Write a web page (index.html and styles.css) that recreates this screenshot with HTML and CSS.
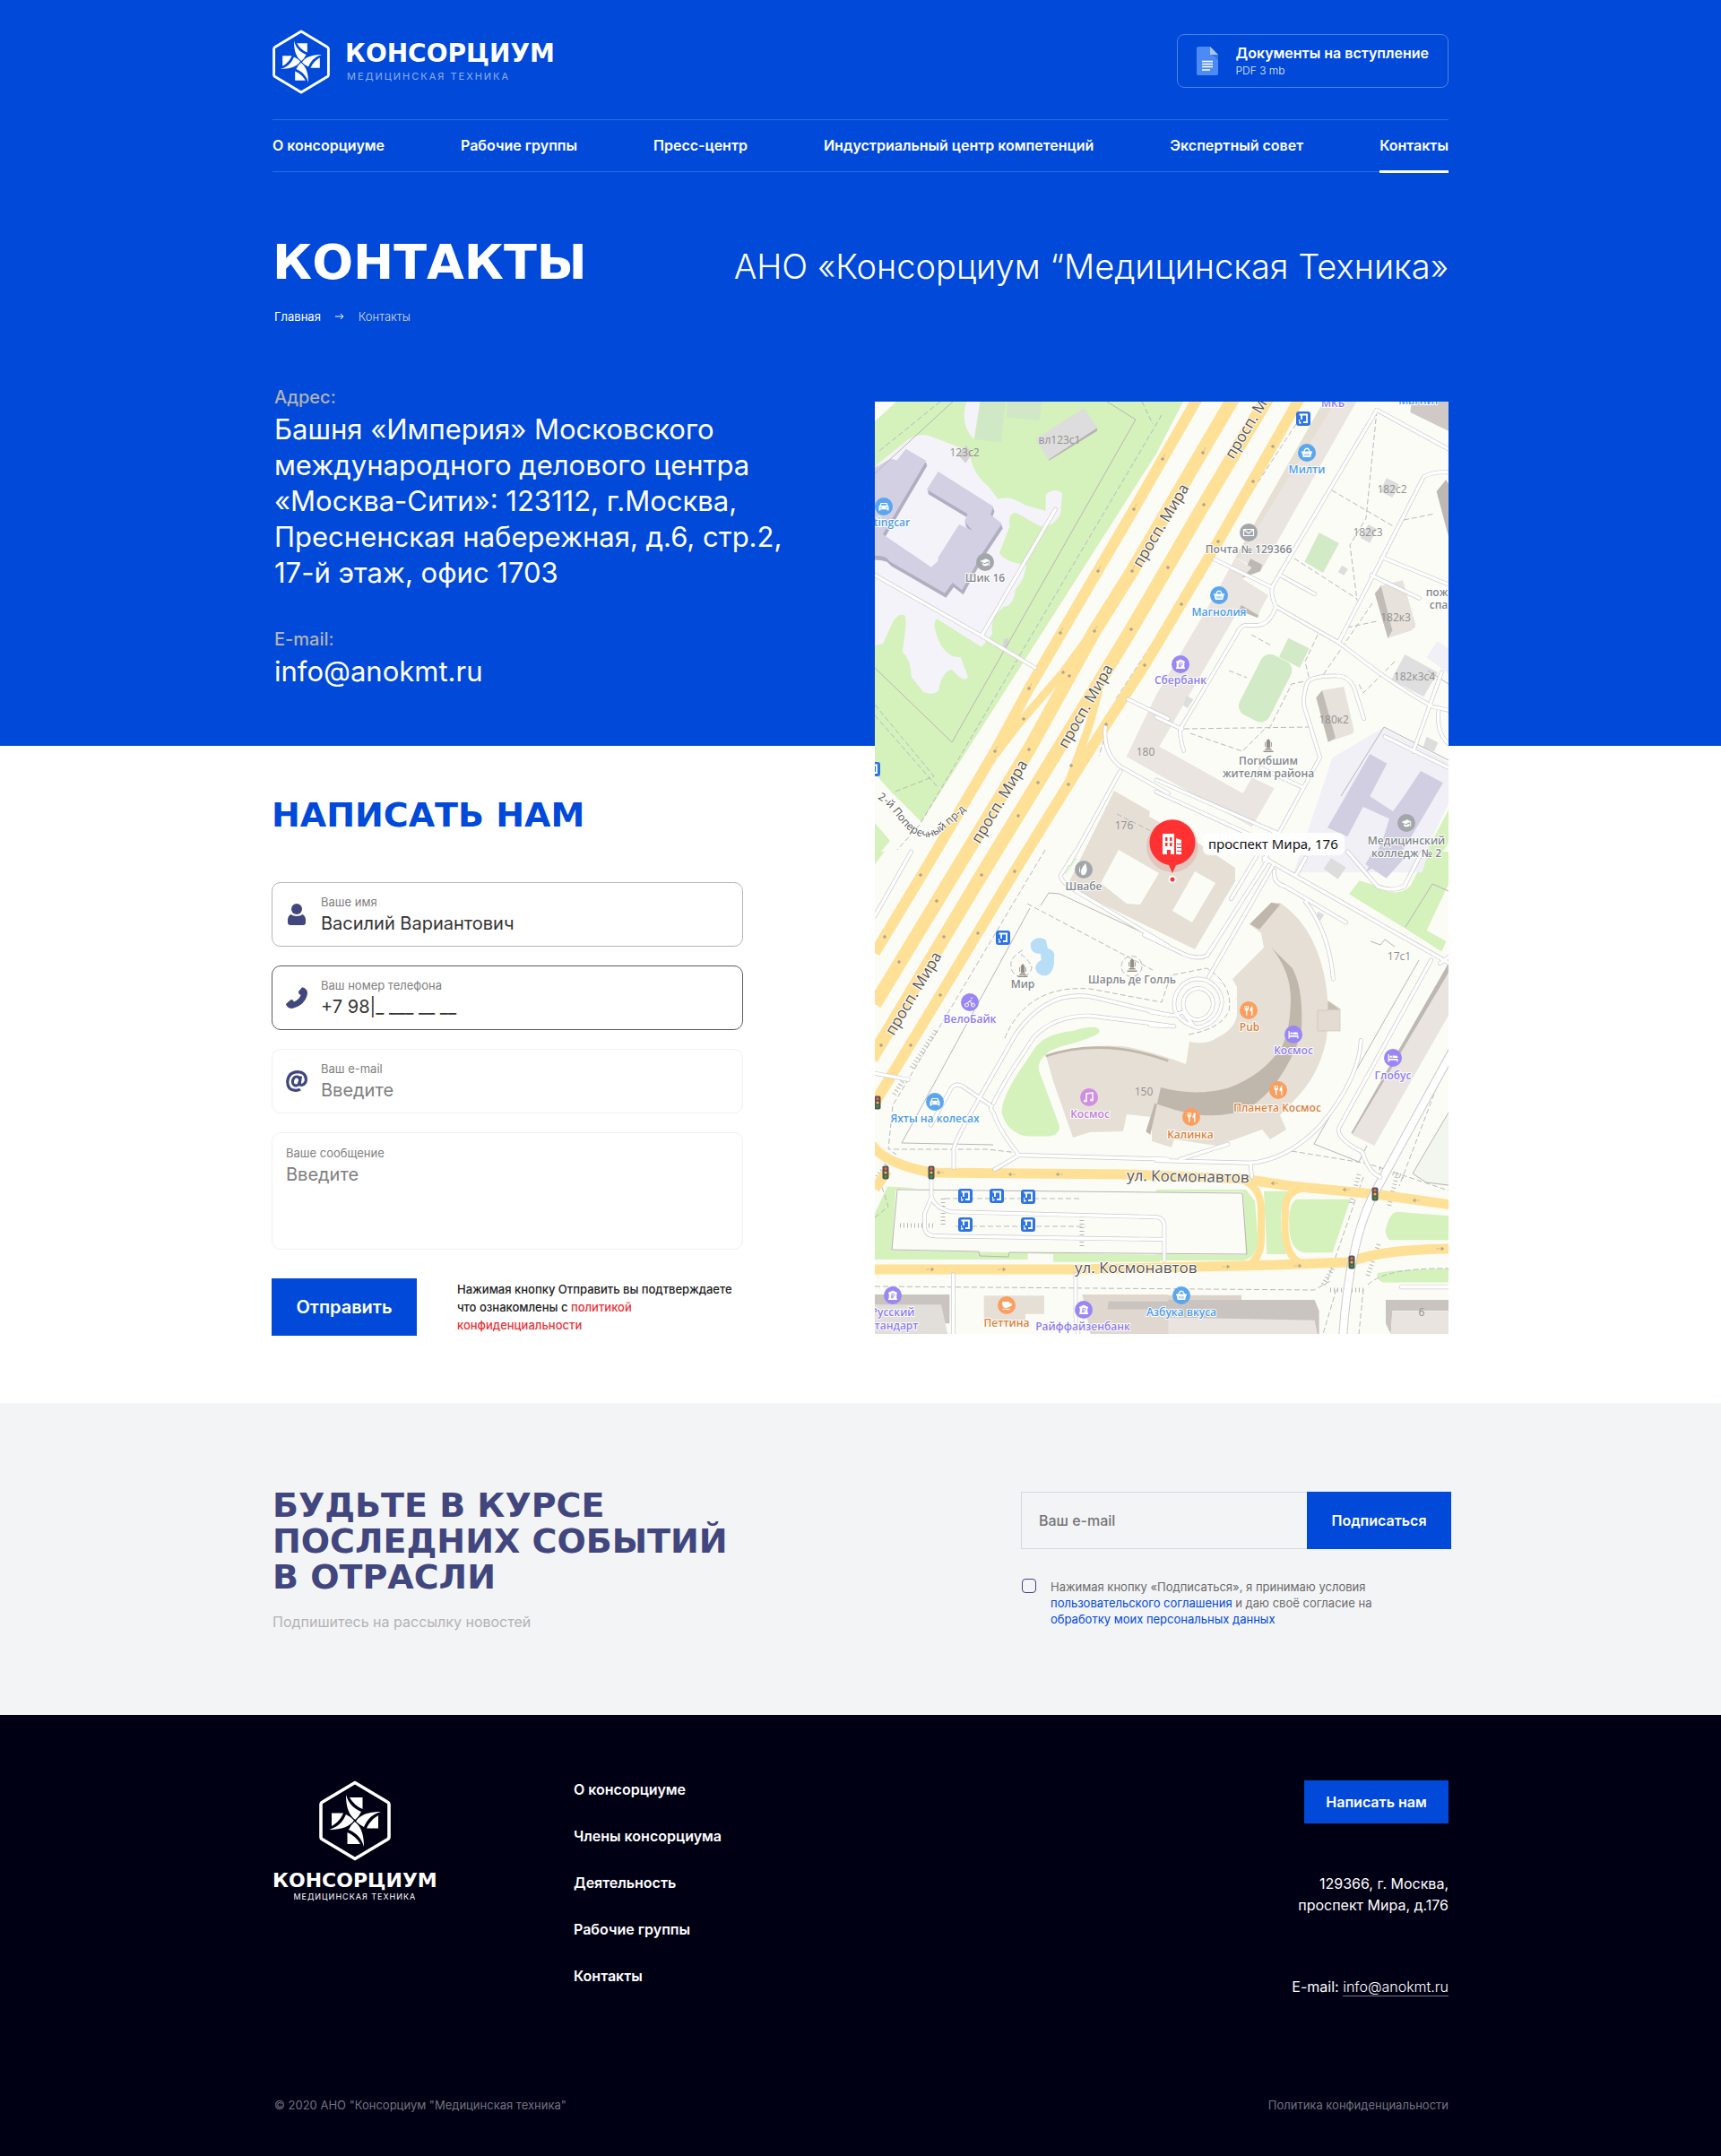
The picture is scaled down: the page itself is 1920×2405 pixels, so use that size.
FILE: index.html
```html
<!DOCTYPE html>
<html lang="ru">
<head>
<meta charset="utf-8">
<meta name="viewport" content="width=device-width, initial-scale=1">
<title>Контакты — Консорциум «Медицинская техника»</title>
<link rel="stylesheet" href="styles.css">
</head>
<body>
<svg class="sprite" aria-hidden="true">
  <defs>
    <g id="petal">
      <path d="M-10-29C-7-18 0-13 7-10Q4-4 .5-1.200Q-1-2-2-3C-8-9-10-18-10-29Z"/>
      <path d="M-6-26H8.500V-13Q-1-17-6-26Z"/>
    </g>
    <symbol id="logo" viewBox="0 0 80 90">
      <path d="M40 2.500 76 24Q78 25 78 27V63Q78 65 76 66L40 87.500 4 66Q2 65 2 63V27Q2 25 4 24Z" fill="none" stroke="currentColor" stroke-width="3.600" stroke-linejoin="round"/>
      <g fill="currentColor" transform="translate(40 45)">
        <use href="#petal"/><use href="#petal" transform="rotate(90)"/><use href="#petal" transform="rotate(180)"/><use href="#petal" transform="rotate(270)"/>
      </g>
    </symbol>
    <g id="bus"><rect x="-8" y="-8" width="16" height="16" rx="3" fill="#2f74e3"/><path d="M-4.500-4.500H5M-2-4V1M4 4V-4M0 4H5M-5 4.500H-2.500M-5 2H-4" fill="none" stroke="#fff" stroke-width="1.800"/></g>
    <g id="light"><rect x="-3.500" y="-7.500" width="7" height="15" rx="2" fill="#555"/><circle cy="-4.300" r="1.600" fill="#f25f5c"/><circle r="1.600" fill="#f4b93a"/><circle cy="4.300" r="1.600" fill="#2c9d3c"/></g>
    <g id="i-fork" fill="#fff"><path d="M-4.500-5V-1.500Q-4.500 0-3 .3V5.500H-1.600V.3Q0 0 0-1.500V-5H-1V-2H-1.800V-5H-2.800V-2H-3.600V-5ZM4.500-5Q1.500-4 1.500 1H3V5.500H4.500Z"/></g>
    <g id="i-basket"><path d="M-3.500-1-1.500-4.500H1.500L3.500-1" fill="none" stroke="#fff" stroke-width="1.300"/><path d="M-6-1.500H6V0H5.300L4.200 5H-4.200L-5.300 0H-6Z" fill="#fff"/><path d="M-2 1V3.500M0 1V3.500M2 1V3.500" stroke="#5aa6ef" stroke-width=".9"/></g>
    <g id="i-bank"><path d="M-5-3 0-5.500 5-3V-2H4.300V3.500H5V5H-5V3.500H-4.300V-2H-5Z" fill="#fff"/><path d="M-1 3.500V-1.700H1Q2.200-1.500 2.200-.4T1 .9H-2M-2 2.200H1" fill="none" stroke="#9a86f5" stroke-width=".9"/></g>
    <g id="i-bed" fill="#fff"><path d="M-5.500-4H-4.200V1H5.500V4.500H4.300V2.800H-4.200V4.500H-5.500ZM-.5-2.500H3.500Q5.500-2.300 5.500 0H-.5Z"/><circle cx="-2.300" cy="-1.200" r="1.300"/></g>
    <g id="i-car"><path d="M-5.500 0-4.600-1-3.500-4H3.500L4.600-1 5.500 0V4.500H3.700V3.300H-3.700V4.500H-5.500Z" fill="#fff"/><path d="M-3.300-1.200-2.600-2.900H2.600L3.300-1.200Z" fill="#5aa6ef"/><path d="M-4 1.200H-2.200M4 1.200H2.200" stroke="#5aa6ef"/></g>
    <g id="i-cap"><path d="M-5.500-1 1-3.800 5.500-1.500-1 1.300Z M-3 1.300-.5 2.300 3.500.7V3.500L-.5 4.500-3 3Z M4.300-1H5.200V4H4.300Z" fill="#fff"/></g>
    <g id="monument" fill="#958f89"><path d="M-2.200-5.500 0-8 2.200-5.500V2.500H-2.200ZM-3.800-4H-3V1H-3.800ZM3-4H3.800V1H3ZM-3.500 3H3.500V4.500H-3.500ZM-5.500 5.500H5.500V7H-5.500Z"/></g>
    <path id="lane" d="M3 443C22 452 28 476 48 484S78 476 112 446"/>
    <path id="school" d="M-60 290 70 215 92 220 122 182 190 222 45 468 207 578 235 552 228 548 300 435 345 455 318 425 328 400 192 318 230 258 415 375 405 402 443 432 378 530 310 655 278 630 252 665 70 560 55 545 35 540-60 535Z"/>
    <!-- side streets, one group per map sheet -->
    <g id="streets-nw" fill="none">
      <path d="M10 600 375 808 555 915M375 808 622 385"/>
      <path d="M865 1020 1000 1085M790 1110Q780 1200 840 1245L1000 1335M840 1260 670 1570"/>
    </g>
    <g id="streets-ne" fill="none">
      <path d="M738 52 390 640Q380 665 400 710 380 770 340 772H300Q280 775 270 800L80 1120Q78 1150 92 1192"/>
      <path d="M738 52 1000 195M195 552 385 645M415 605 530 668M400 710 610 830 750 935Q860 1010 925 1045L1000 1062"/>
      <path d="M610 830 755 550 895 275Q930 255 1000 262M755 545 1000 645M720 605 880 682"/>
      <path d="M695 1085 665 990Q650 945 610 942 520 940 505 965 485 1030 500 1060L548 1215 360 1560M955 930 860 1195M765 1145 1000 1260M945 1060Q935 1150 1000 1185M350 1250 490 1315M0 1080 85 1120"/>
      <path d="M0 1330 395 1510 M0 1290 410 1470" />
    </g>
    <g id="streets-sw" fill="none">
      <path d="M690 0 640 75Q640 100 700 130L1000 300M282 1005V945Q285 920 370 780L490 580Q600 430 760 465L1000 520"/>
      <path d="M205 870 275 750Q290 735 310 745L410 810Q400 815 415 830 430 880 500 965L1000 978M500 965Q440 1000 420 1010M415 800Q430 770 470 705L550 590Q620 520 740 522L1000 553"/>
      <path d="M207 1040V1095Q215 1130 270 1145L960 1162Q990 1165 987 1200V1300M207 1100 185 1150V1200Q190 1222 220 1222L985 1233M280 1345V1540M690 1345V1480L700 1540M18 705 130 725M140 0 18 205"/>
    </g>
    <g id="streets-se" fill="none">
      <path d="M360 20 1000 365M395 60Q390 100 430 110L635 225M500 160Q580 260 592 405M500 20 470 70M1000 320 950 355M345 0 250 150M390 45 175 400M375 25 170 330Q140 345 90 325L-40 265"/>
      <path d="M920 345 610 880Q605 915 690 955 710 1020 750 1035M685 600Q680 720 550 870 440 980 315 990L320 1035M0 982 315 990M80 978 240 930M820 1385H1000M640 0 740 110Q790 130 830 110L890 0"/>
      <path d="M190 480A50 50 0 1 0 140 535A55 55 0 0 0 190 480M220 480A80 80 0 1 0 60 490Q65 540 140 560 210 545 220 480M60 520 90 510 125 555M-20 552 60 555M-20 510 70 522"/>
    </g>
  </defs>
</svg>

<section class="hero">
  <div class="container">
    <header class="header">
      <a class="brand" href="#">
        <svg class="brand__mark" viewBox="0 0 80 90" preserveAspectRatio="none" aria-hidden="true"><use href="#logo"/></svg>
        <span class="brand__text"><span class="brand__name">КОНСОРЦИУМ</span><span class="brand__sub">МЕДИЦИНСКАЯ ТЕХНИКА</span></span>
      </a>
      <a class="doc" href="#">
        <svg class="doc__icon" viewBox="0 0 24 32" aria-hidden="true">
          <path d="M2 0H15L24 9V30Q24 32 22 32H2Q0 32 0 30V2Q0 0 2 0Z" fill="#4c8bf5"/>
          <path d="M16 8 24 15V9Z" fill="#3673dc"/><path d="M15 0 24 9H15Z" fill="#a6c5fa"/>
          <path d="M6 16.500H18M6 19.500H18M6 22.500H18M6 26H15" stroke="#fff" stroke-width="1.400"/>
        </svg>
        <span class="doc__text"><span class="doc__title">Документы на вступление</span><span class="doc__meta">PDF 3 mb</span></span>
      </a>
    </header>
    <nav class="nav">
      <a href="#">О консорциуме</a>
      <a href="#">Рабочие группы</a>
      <a href="#">Пресс-центр</a>
      <a href="#">Индустриальный центр компетенций</a>
      <a href="#">Экспертный совет</a>
      <a href="#" class="nav__active" aria-current="page">Контакты</a>
    </nav>
    <div class="headline">
      <h1>КОНТАКТЫ</h1>
      <p class="headline__org">АНО «Консорциум “Медицинская Техника»</p>
    </div>
    <div class="crumbs">
      <a href="#">Главная</a>
      <svg class="crumbs__arrow" viewBox="0 0 10 8" aria-hidden="true"><path d="M0 4H9M6 1 9 4 6 7" fill="none" stroke="currentColor"/></svg>
      <span class="crumbs__here">Контакты</span>
    </div>
    <div class="contact">
      <dl class="contact__info">
        <dt>Адрес:</dt>
        <dd>Башня «Империя» Московского<br>международного делового центра<br>«Москва-Сити»: 123112, г.Москва,<br>Пресненская набережная, д.6, стр.2,<br>17-й этаж, офис 1703</dd>
        <dt>E-mail:</dt>
        <dd><a href="mailto:info@anokmt.ru">info@anokmt.ru</a></dd>
      </dl>
      <svg class="map" viewBox="0 0 640 1040" preserveAspectRatio="xMidYMid slice" role="img" aria-label="Карта: проспект Мира, 176">
        <rect width="640" height="1040" fill="#fcfcf6"/>

        <!-- parks -->
        <g fill="#d5f1bc">
          <path d="M24 0H344L314 58 52 469 19 436 0 415V22Z"/>
          <path d="M0 470 17 490 0 510ZM0 502H10L0 516Z"/>
          <path d="M209 522 218 505 226 510 213 528Z" opacity=".6"/>
        </g>
        <g transform="translate(-6 502) scale(.3333 .3508)" fill="#d5f1bc">
          <path d="M770 572Q760 590 640 620 570 640 565 690L635 870Q640 900 600 905H530Q460 895 443 830 440 790 500 700L550 630Q580 580 680 570 770 545 770 572Z"/>
          <path d="M18 1297V1150L60 1065 160 1070 88 1075 75 1268 990 1282 970 1305H615V1280L530 1278V1297Z"/>
          <path d="M18 0H50L18 40Z"/>
        </g>
        <g transform="translate(314 502) scale(.3333 .3508)" fill="#d5f1bc">
          <path d="M645 135 680 92 740 110Q800 150 850 110L910 0H1000V60L905 250 970 285 955 318 835 245Z"/>
          <path d="M0 1082H290L300 1282 0 1280V1300H290Q340 1290 340 1230L330 1110 300 1075H0ZM360 1080H440Q470 1100 420 1130 410 1200 435 1280H370Z"/>
          <path d="M470 1105H650L590 1275H490Q445 1260 445 1190 440 1120 470 1105ZM805 1145 978 1158V1235H780Q765 1220 768 1200 780 1150 805 1145ZM740 1340 790 1333 978 1325V1370H760Q735 1362 740 1340Z"/>
        </g>
        <path d="M0 430 20 444 50 480 90 465 60 502H0Z" fill="#fcfcf6"/>
        <path d="M0 470 17 490 0 510Z" fill="#d5f1bc"/>

        <!-- grounds and buildings, north-west -->
        <g transform="translate(-6 -8) scale(.3333)">
          <path d="M18 240 130 150Q165 128 200 138L335 190Q340 260 400 310L430 350Q470 335 520 370L590 390V335Q620 310 645 330L640 400Q610 450 570 440L490 395Q460 400 470 440L435 530Q450 560 525 570 520 620 490 650 480 710 450 710 400 750 412 800L375 845 225 750Q205 770 240 840 270 885 305 878L330 945Q320 970 275 920 240 930 232 990 215 1010 180 995L140 945Q140 890 110 860 130 740 115 738 90 730 70 780L45 835 18 840Z" fill="#f4f3f9"/>
          <path d="M325 24H370L350 150Q300 100 325 24Z" fill="#f4f3f9"/>
          <path d="M372 24H455L440 160 352 150ZM462 24H577L568 88 458 76Z" fill="#d0e8c6"/>
          <path d="M600 222 762 122V112L600 212Z" fill="#b5b3b3"/><path d="M555 150 718 45 762 112 600 218Z" fill="#dedddd"/>
          <path d="M295 200 325 170 342 200 322 230Z" fill="#d5d3d3"/>
          <use href="#school" x="4" y="15" fill="#b2aec2"/><use href="#school" x="2" y="8" fill="#b2aec2"/>
          <use href="#school" fill="#d4d0e3"/>
          <path d="M450 820 465 815 465 840 447 850Z" fill="#d5d3d8"/>
        </g>
        <!-- buildings, north-east -->
        <g transform="translate(314 -8) scale(.3333)">
          <path d="M560 24 670 24 350 590 265 545Z" fill="#eae5e0"/>
          <path d="M560 24 265 545 275 550 600 24Z" fill="#e6dfd4"/>
          <path d="M315 550 355 570 348 592 285 615ZM285 695 345 720 340 748 270 720Z" fill="#bdb8b3"/>
          <path d="M265 545 320 580 285 615 375 672 340 738 285 705 10 1178 290 1335 320 1282 395 1318 320 1448-100 1212 0 1005 200 665Z" fill="#eae5e0"/>
          <path d="M820 24H978V85L830 28Z" fill="#e2deda"/><path d="M855 24H978V122L850 60Z" fill="#cfcac6"/>
          <path d="M938 325 970 285 978 300V475Z" fill="#bdb8b3"/>
          <path d="M545 462 612 498 558 597 496 560Z" fill="#d2eac6"/><path d="M442 815 512 850 480 915 411 878Z" fill="#d2eac6"/>
          <rect x="-56" y="-112" width="112" height="224" rx="34" transform="translate(365 983) rotate(27)" fill="#d2eac6"/>
          <path d="M732 665 755 640 775 815 865 780V770L830 790Z" fill="#c2bcb6"/><path d="M750 640 825 622 868 770 855 790 775 815 755 700Z" fill="#e8e2dc"/><path d="M732 668 752 640 790 790 775 815Z" fill="#c2bcb6"/>
          <path d="M555 990 628 978 662 1125 658 1135 575 1163Z" fill="#e8e2dc"/><path d="M535 1015 555 990 600 1150 575 1163Z" fill="#c2bcb6"/>
          <path d="M832 870 942 930 895 1012 787 955Z" fill="#e0dfe0"/><path d="M905 1145 943 1165 930 1195 893 1180ZM770 280 812 300 790 345 750 325ZM710 435 738 450 715 497 683 480ZM622 572 642 585 628 605 608 595ZM100 1008 124 1020 105 1050 90 1040Z" fill="#dedddd"/>
          <path d="M905 880 940 825 978 850V935ZM460 1600 590 1215 760 1115 978 1230V1370L930 1470 890 1600Z" fill="#f1f0f6"/>
          <path d="M715 1203 772 1235 715 1345 792 1395 825 1350 885 1260 960 1300 830 1520 700 1600 755 1500 780 1420 692 1380 640 1480 573 1450Z" fill="#d1cee2"/>
          <path d="M978 1390V1500L940 1560 900 1540Z" fill="#d5f1bc"/>
        </g>
        <!-- hotel quarter -->
        <path d="M267 434 307 457 306 463 357 490 402 520V535L357 611 214 541Z" fill="#e6dfd5"/>
        <path d="M272 500 317 526 296 561 281 560 252 537ZM357 524 380 537 354 581 332 568Z" fill="#fcfcf6"/>
        <path d="M418 583 442 559H452Q480 578 493 612 510 655 504 710 497 748 472 775L452 796 459 812 441 823 432 812Q405 822 381 830L334 823 331 832 309 825V798L281 795 277 814 240 815 221 821 199 758 191 730Q230 716 277 719 310 725 347 739L351 714Q370 718 381 710 402 700 404 684V653L399 644 434 609 431 593Z" fill="#e6dfd5"/>
        <g transform="translate(314 502) scale(.3333 .3508)">
          <path d="M313 230 385 162 415 168 345 247ZM385 305Q450 380 450 470 448 570 420 620 360 710 240 752 130 780 15 750L-20 900-35 890-5 800 60 820Q200 860 310 815 420 750 485 580 495 440 455 370Z" fill="#bfb7ac"/>
          <path d="M575 475 615 500V570H540V505H575Z" fill="#e4dcd2" stroke="#cbc2b8" stroke-width="2"/><path d="M575 475 615 503H575Z" fill="#c5beb5"/>
          <path d="M978 355V385L690 905 652 895Z" fill="#bdb8b3"/><path d="M978 385V520L730 935 655 900Z" fill="#e9e4df"/>
          <path d="M585 20 635 50 608 88 560 55ZM540 190 562 200 550 218 535 210Z" fill="#dedddd"/><path d="M700 40 725 0H850L770 85Z" fill="#d1cee2"/>
          <path d="M978 830 858 1025 905 1055 978 1065Z" fill="#f3f6ee"/>
          <path d="M768 1425H978V1460H790L785 1535 768 1500ZM0 1425H530L545 1460V1535H0Z" fill="#c9c4c0"/><path d="M790 1462H978V1535H785ZM0 1480 530 1490 540 1535H0Z" fill="#e9e4df"/><path d="M0 1410H285V1425H0Z" fill="#dcd4cb"/>
        </g>
        <g transform="translate(-6 502) scale(.3333 .3508)">
          <path d="M590 650Q780 590 1000 665" fill="none" stroke="#bfb7ac" stroke-width="8"/>
          <path d="M18 1408H268V1500H18Z" fill="#c9c4c0"/><path d="M18 1440H240L262 1535H18Z" fill="#e2ded9"/>
          <path d="M383 1412H585V1470H522V1500H383Z" fill="#e6dfd5"/><path d="M712 1408H1000V1535H740Z" fill="#e0d8cf"/><path d="M800 1430H1000V1455H797Z" fill="#c9c4c0"/>
          <path d="M540 290Q560 265 590 280L597 308Q625 315 618 340 620 385 590 395 560 395 555 370 560 350 575 345L573 325Q535 325 540 290Z" fill="#b8def6"/>
        </g>

        <!-- fences and property lines -->
        <g fill="none" stroke="#b9b5b8" stroke-width="1">
          <path d="M87 0 0 80M259 0 291 20 86 380 0 297M173 565 30 827 132 829"/>
          <path d="M185 562 194 548 206 549 324 604M25 879 19 946 116 948 117 953 149 954 150 949 415 951 410 883 25 879M607 623 490 828 540 848 549 830"/>
          <path d="M640 793 600 861 615 871 640 874M553 602 564 606 569 600 580 608M520 440 568 363 640 400M592 586 622 538 640 546M617 300 640 315"/>
        </g>
        <g fill="none" stroke="#b7babd" stroke-width="1" stroke-dasharray="6 3">
          <path d="M320 15 50 472 25 500M73 0 5 55M0 338 66 418 20 436M0 350 70 430M298 0 310 25M470 25 270 330 250 395M560 10 548 130 530 160 538 222M510 99 580 140M468 175 538 220M494 260 480 290 485 310M555 225 500 305M420 260 442 272M395 300 415 308M440 365 465 315 480 312M345 365 484 363M352 370 410 390 435 365"/>
          <path d="M190 500 20 785 15 834H125L160 838M170 560 310 634M165 612Q150 620 152 630A10 10 0 0 0 175 630Q170 620 160 615M275 630A11 11 0 0 1 298 630A11 11 0 0 1 275 630M145 710Q170 650 240 655L320 670 330 640 370 632Q400 650 395 680 385 700 350 706M78 889H230M90 920H235M0 987 490 991 510 980M465 836 550 850 640 880M545 865 505 980M640 730 585 875M515 990 500 1040M545 990 540 1040M550 985Q570 966 640 967M270 460 330 490"/>
          <path d="M0 910 15 898 6 870M580 290 545 325 540 315M590 132 625 125M527 252 560 245"/>
        </g>
        <g fill="none" stroke="#b4b7ba" stroke-width="5" stroke-dasharray="1 3">
          <path d="M68 702 40 745M33 755 20 775M22 838 2 866M28 919H65M76 889V918M231 909V945M540 862 531 895M582 865 573 900M515 960 500 985M562 940 550 975M508 991H545M563 855 590 865"/>
        </g>

        <!-- avenues -->
        <g fill="none" stroke="#fee097" stroke-linejoin="round">
          <path stroke-width="12" d="M360 -4 321 64 289 120 172 320 134 390 62 512 0 615M474-4 383 156 301 294 258 360 216 427 156 524 73 662 0 782"/>
          <path stroke-width="9" d="M242 258 210 302 160 360 134 394M250 322 238 365 214 430"/>
          <path stroke-width="15" d="M400-4 287 189 245 256 172 388 97 512 0 672M438-4 367 115 286 254 182 425 119 528 7 715-4 733"/>
          <path stroke-width="11" d="M-4 828Q10 850 63 860L280 862 411 867 464 875 558 884 644 896M0 878 14 858M-4 968H225L447 963 527 960Q570 945 644 945"/>
          <path stroke-width="8" d="M408 868Q430 874 431 900V935Q431 955 415 964M480 877Q456 880 458 905 454 955 478 962"/>
        </g>
        <path d="M644 725 560 878Q530 930 522 1044" fill="none" stroke="#c9cacd" stroke-width="10"/>
        <path d="M644 725 560 878Q530 930 522 1044" fill="none" stroke="#fff" stroke-width="8"/>
        <g class="map__case">
          <use href="#streets-nw" transform="translate(-6 -8) scale(.3333)"/><use href="#streets-ne" transform="translate(314 -8) scale(.3333)"/><use href="#streets-sw" transform="translate(-6 502) scale(.3333 .3508)"/><use href="#streets-se" transform="translate(314 502) scale(.3333 .3508)"/>
        </g>
        <g class="map__core">
          <use href="#streets-nw" transform="translate(-6 -8) scale(.3333)"/><use href="#streets-ne" transform="translate(314 -8) scale(.3333)"/><use href="#streets-sw" transform="translate(-6 502) scale(.3333 .3508)"/><use href="#streets-se" transform="translate(314 502) scale(.3333 .3508)"/>
        </g>
        <g fill="#b3a88f" stroke="#b3a88f" stroke-width=".5">
          <path d="M319 64l2-2 2 2-2 2ZM322 62l2-4M287 120l2-2 2 2-2 2ZM290 118l2-4M247 189l2-2 2 2-2 2ZM250 187l2-4M205 258l2-2 2 2-2 2ZM208 256l2-4M170 320l2-2 2 2-2 2ZM173 318l2-4M132 390l2-2 2 2-2 2ZM135 388l2-4"/>
          <path d="M364 57l2-2 2 2-2 2ZM367 55l2-4M285 189l2-2 2 2-2 2ZM288 187l2-4M243 256l2-2 2 2-2 2ZM246 254l2-4M215 306l2-2 2 2-2 2ZM208 302l2-2 2 2-2 2ZM170 388l2-2 2 2-2 2ZM164 354l2-2 2 2-2 2Z"/>
          <path d="M365 115l2-2 2 2-2 2ZM325 185l2-2 2 2-2 2ZM284 254l2-2 2 2-2 2ZM180 425l2-2 2 2-2 2ZM158 462l2-2 2 2-2 2ZM442 50l2-2 2 2-2 2ZM420 89l2-2 2 2-2 2ZM381 156l2-2 2 2-2 2ZM340 226l2-2 2 2-2 2ZM299 294l2-2 2 2-2 2ZM256 360l2-2 2 2-2 2ZM217 406l2-2 2 2-2 2ZM214 427l2-2 2 2-2 2Z"/>
          <path d="M49 528l2-2 2 2-2 2ZM9 597l2-2 2 2-2 2ZM67 557l2-2 2 2-2 2ZM25 625l2-2 2 2-2 2ZM117 528l2-2 2 2-2 2ZM75 597l2-2 2 2-2 2ZM154 524l2-2 2 2-2 2ZM113 593l2-2 2 2-2 2ZM71 662l2-2 2 2-2 2ZM38 718l2-2 2 2-2 2ZM5 718l2-2 2 2-2 2Z"/>
          <path d="M69 860l3-2V862ZM72 860h5M149 862l3-2V864ZM152 862h5M202 862l3-2V864ZM205 862h5M442 872l3-2V874ZM445 872h5M522 879l3-2V881ZM525 879h5M600 891l3-2V893ZM603 891h5M66 968l-3-2V970ZM63 968h-6M146 968l-3-2V970ZM143 968h-6M396 965l-3-2V967ZM393 965h-6M476 964l-3-2V966ZM473 964h-6M635 945l-3-2V947ZM632 945h-6"/>
        </g>

        <!-- street names -->
        <g class="map__street">
          <text transform="translate(400 65) rotate(-59)">просп. М</text>
          <text transform="translate(297 186) rotate(-59)">просп. Мира</text>
          <text transform="translate(214 388) rotate(-60)">просп. Мира</text>
          <text transform="translate(117 494) rotate(-59)">просп. Мира</text>
          <text transform="translate(21 708) rotate(-59)">просп. Мира</text>
          <text transform="translate(281 869) rotate(1)">ул. Космонавтов</text>
          <text x="223" y="972">ул. Космонавтов</text>
        </g>
        <text class="map__lane"><textPath href="#lane">2-й Поперечный пр-д</textPath></text>

        <!-- house numbers -->
        <g class="map__num">
          <text x="100" y="61">123с2</text><text x="206" y="47">вл123с1</text><text x="577" y="102">182с2</text><text x="550" y="150">182с3</text>
          <text x="581" y="245">182к3</text><text x="602" y="311">182к3с4</text><text x="512" y="359">180к2</text><text x="302" y="395">180</text><text x="278" y="477">176</text>
          <text x="300" y="774">150</text><text x="585" y="623">17с1</text><text x="610" y="1020">6</text>
        </g>

        <!-- places -->
        <g class="map__poi map__poi--blue">
          <circle cx="10" cy="117" r="10"/><use href="#i-car" x="10" y="117"/><text x="19" y="139">tingcar</text>
          <circle cx="482" cy="57" r="10"/><use href="#i-basket" x="482" y="57"/><text x="482" y="80">Милти</text>
          <circle cx="384" cy="216" r="10"/><use href="#i-basket" x="384" y="216"/><text x="384" y="239">Магнолия</text>
          <circle cx="67" cy="781" r="10"/><use href="#i-car" x="67" y="781"/><text x="67" y="804">Яхты на колесах</text>
          <circle cx="342" cy="997" r="10"/><use href="#i-basket" x="342" y="997"/><text x="342" y="1020">Азбука вкуса</text>
          <text x="607" y="3">Магнит</text>
        </g>
        <g class="map__poi map__poi--violet">
          <circle cx="341" cy="293" r="10"/><use href="#i-bank" x="341" y="293"/><text x="341" y="315">Сбербанк</text>
          <circle cx="106" cy="670" r="10"/><g transform="translate(106 670)" fill="none" stroke="#fff"><circle cx="-3.500" cy="3" r="2"/><circle cx="3.500" cy="3" r="2"/><path d="M-3 2-1-1 2 1 3 3M-1-1 2-2"/><circle cx="2" cy="-4.500" r=".6"/></g><text x="106" y="693">ВелоБайк</text>
          <circle cx="467" cy="706" r="10"/><use href="#i-bed" x="467" y="706"/><text x="467" y="728">Космос</text>
          <circle cx="578" cy="732" r="10"/><use href="#i-bed" x="578" y="732"/><text x="578" y="756">Глобус</text>
          <circle cx="20" cy="997" r="10"/><use href="#i-bank" x="20" y="997"/><text x="20" y="1020">Русский</text><text x="24" y="1035">тандарт</text>
          <circle cx="233" cy="1013" r="10"/><use href="#i-bank" x="233" y="1013"/><text x="232" y="1036">Райффайзенбанк</text>
          <text x="511" y="6">МКБ</text>
        </g>
        <g class="map__poi map__poi--orange">
          <circle cx="417" cy="679" r="10"/><use href="#i-fork" x="417" y="679"/><text x="418" y="702">Pub</text>
          <circle cx="450" cy="768" r="10"/><use href="#i-fork" x="450" y="768"/><text x="449" y="792">Планета Космос</text>
          <circle cx="353" cy="798" r="10"/><use href="#i-fork" x="353" y="798"/><text x="352" y="822">Калинка</text>
          <circle cx="147" cy="1008" r="10"/><path d="M142 1004H150V1006Q153 1005 153 1007T149 1010Q147 1012 144 1010.500 142 1009 142 1004ZM142 1012H151V1013H142Z" fill="#fff"/><text x="147" y="1032">Петтина</text>
        </g>
        <g class="map__poi map__poi--pink">
          <circle cx="239" cy="776" r="10"/><path d="M236 780V772L243 771V779" fill="none" stroke="#fff" stroke-width="1.500"/><ellipse cx="235" cy="780" rx="2" ry="1.600" fill="#fff"/><ellipse cx="242" cy="779" rx="2" ry="1.600" fill="#fff"/><text x="240" y="799">Космос</text>
        </g>
        <g class="map__poi map__poi--grey">
          <circle cx="123" cy="179" r="10"/><use href="#i-cap" x="123" y="179"/><text x="123" y="201">Шик 16</text>
          <circle cx="417" cy="146" r="10"/><path d="M411.500 142.500H422.500V149.500H411.500ZM411.500 142.500 417 147 422.500 142.500" fill="none" stroke="#fff" stroke-width="1.200"/><text x="417" y="169">Почта № 129366</text>
          <circle cx="593" cy="470" r="10"/><use href="#i-cap" x="593" y="470"/><text x="593" y="494">Медицинский</text><text x="593" y="508">колледж № 2</text>
          <circle cx="233" cy="522" r="10"/><path d="M235 515Q238 522 235 527 231 530 230 526T235 515ZM229 518Q227 523 229 526" fill="#fff"/><text x="233" y="545">Швабе</text>
          <use href="#monument" x="439" y="384"/><text x="439" y="405">Погибшим</text><text x="439" y="419">жителям района</text>
          <use href="#monument" x="165" y="635"/><text x="165" y="654">Мир</text>
          <use href="#monument" x="287" y="629"/><text x="287" y="649">Шарль де Голль</text>
          <text x="627" y="217">пож</text><text x="629" y="231">спа</text>
        </g>
        <use href="#bus" x="478" y="19"/><use href="#bus" x="-2" y="410"/><use href="#bus" x="143" y="598"/><use href="#bus" x="101" y="886"/><use href="#bus" x="136" y="886"/><use href="#bus" x="171" y="887"/><use href="#bus" x="101" y="918"/><use href="#bus" x="171" y="918"/>
        <use href="#light" x="3" y="782"/><use href="#light" x="12" y="860"/><use href="#light" x="63" y="860"/><use href="#light" x="558" y="884"/><use href="#light" x="532" y="960"/>

        <!-- office pin -->
        <circle cx="332" cy="496" r="29" fill="#c33" opacity=".14"/>
        <path d="M332 526 328 517A25.500 25.500 0 1 1 336 517Z" fill="#fe3232"/>
        <path d="M321 482H334V505H330V500H326V505H321ZM336 487 342 489V505H336Z" fill="#fff"/>
        <path d="M324 486H326.500V490H324ZM329 486H331.500V490H329ZM324 492H326.500V496H324ZM329 492H331.500V496H329ZM337 493H343V494H337ZM337 497H343V498H337ZM337 501H343V502H337Z" fill="#fe3232"/>
        <circle cx="332" cy="533" r="4.500" fill="#fff"/><circle cx="332" cy="533" r="2.500" fill="#fe3232"/>
        <rect x="366" y="481" width="158" height="25" rx="7" fill="#fff" opacity=".92"/>
        <text class="map__office" x="372" y="499">проспект Мира, 176</text>
      </svg>
    </div>
  </div>
</section>

<section class="write">
  <div class="container">
    <form class="form">
      <h2>НАПИСАТЬ НАМ</h2>
      <div class="form__fields">
        <div class="field field--filled">
          <svg class="field__icon" viewBox="0 0 24 24" aria-hidden="true"><ellipse cx="12" cy="6" rx="6" ry="6"/><path d="M5.500 12Q8 14 12 14T18.500 12Q22 13.500 22 19V21Q22 24 19 24H5Q2 24 2 21V19Q2 13.500 5.500 12Z"/></svg>
          <div class="field__body"><label for="name">Ваше имя</label><input id="name" type="text" value="Василий Вариантович"></div>
        </div>
        <div class="field field--focus">
          <svg class="field__icon" viewBox="0 0 24 24" aria-hidden="true"><path d="M19 .5Q24 2 24 7 22 20 7 24 2 24 0 19.500Q0 18.500 1 18L5 14.500Q6.500 13.500 8 15L9 16.500Q15 14 16.500 9L15 8Q13.500 6.500 14 5L17.500 1Q18 0 19 .5Z"/></svg>
          <div class="field__body"><label for="phone">Ваш номер телефона</label><input id="phone" type="text" value="+7 98|_ ___ __ __"></div>
        </div>
        <div class="field">
          <svg class="field__icon" viewBox="0 0 24 24" aria-hidden="true"><g fill="none" stroke="currentColor" stroke-width="3.200"><ellipse cx="11.500" cy="12" rx="4" ry="5" transform="rotate(15 11.500 12)"/><path d="M16.500 6.500 15.200 14Q15 16.500 17.500 16.500 22.400 15.500 22.400 10 22 2 13 1.700 2.500 2 1.700 13 2 22.500 11 22.400 14 22.300 16 21"/></g></svg>
          <div class="field__body"><label for="email">Ваш e-mail</label><input id="email" type="email" placeholder="Введите"></div>
        </div>
        <div class="field field--area">
          <div class="field__body"><label for="message">Ваше сообщение</label><textarea id="message" placeholder="Введите"></textarea></div>
        </div>
      </div>
      <div class="form__foot">
        <button class="btn btn--send" type="button">Отправить</button>
        <p class="form__note">Нажимая кнопку Отправить вы подтверждаете<br>что ознакомлены с <a href="#">политикой<br>конфиденциальности</a></p>
      </div>
    </form>
  </div>
</section>

<section class="news">
  <div class="container news__row">
    <div>
      <h2>БУДЬТЕ В КУРСЕ<br>ПОСЛЕДНИХ СОБЫТИЙ<br>В ОТРАСЛИ</h2>
      <p class="news__lead">Подпишитесь на рассылку новостей</p>
    </div>
    <form class="subscribe">
      <div class="subscribe__row">
        <input type="email" placeholder="Ваш e-mail" aria-label="Ваш e-mail">
        <button class="btn" type="button">Подписаться</button>
      </div>
      <div class="consent">
        <input type="checkbox" id="agree">
        <label for="agree">Нажимая кнопку «Подписаться», я принимаю условия<br><a href="#">пользовательского соглашения</a> и даю своё согласие на<br><a href="#">обработку моих персональных данных</a></label>
      </div>
    </form>
  </div>
</section>

<footer class="footer">
  <div class="container">
    <div class="footer__main">
      <a class="footer__brand" href="#">
        <svg class="footer__mark" viewBox="0 0 80 90" aria-hidden="true"><use href="#logo"/></svg>
        <span class="footer__name">КОНСОРЦИУМ</span>
        <span class="footer__sub">МЕДИЦИНСКАЯ ТЕХНИКА</span>
      </a>
      <nav class="footer__nav">
        <a href="#">О консорциуме</a><a href="#">Члены консорциума</a><a href="#">Деятельность</a><a href="#">Рабочие группы</a><a href="#">Контакты</a>
      </nav>
      <div class="footer__contact">
        <button class="btn btn--small" type="button">Написать нам</button>
        <address>129366, г. Москва,<br>проспект Мира, д.176</address>
        <p>E-mail: <a href="mailto:info@anokmt.ru">info@anokmt.ru</a></p>
      </div>
    </div>
    <div class="footer__legal">
      <span>© 2020 АНО "Консорциум "Медицинская техника"</span>
      <a href="#">Политика конфиденциальности</a>
    </div>
  </div>
</footer>
</body>
</html>
```
FILE: styles.css
```css
:root {
  --blue: #0049d9;
  --navy: #41467f;
  --display: "DejaVu Sans", Inter, sans-serif;
}

* { box-sizing: border-box; }

body {
  margin: 0;
  background: #fff;
  color: #222;
  font-family: Inter, "Liberation Sans", sans-serif;
  font-size: 16px;
  line-height: 24px;
}

h1, h2, p, dl, dd { margin: 0; }
a { color: inherit; text-decoration: none; }
input, textarea, button { font: inherit; }

.sprite { display: none; }

.container {
  max-width: 1312px;
  margin: 0 auto;
}

h1, h2, .brand__name, .footer__name {
  font-family: var(--display);
  font-weight: 700;
}

h2 {
  font-size: 38px;
  line-height: 40px;
}

.btn {
  border: 0;
  background: var(--blue);
  color: #fff;
  font-weight: 600;
  cursor: pointer;
}

/* hero */
.hero {
  background: var(--blue);
  color: #fff;
}

.header {
  display: flex;
  justify-content: space-between;
  align-items: flex-start;
  padding: 33px 0 28px;
}

.brand {
  display: flex;
  gap: 17px;
}

.brand__mark { width: 64px; height: 72px; }

.brand__text {
  display: flex;
  flex-direction: column;
  padding-top: 11px;
}

.brand__name {
  font-size: 28px;
  line-height: 32px;
}

.brand__sub {
  padding: 1px 0 0 2px;
  font-size: 11px;
  line-height: 16px;
  letter-spacing: 2px;
  opacity: .55;
}

.doc {
  display: flex;
  align-items: center;
  gap: 20px;
  margin-top: 5px;
  padding: 9px 21px;
  border: 1px solid #4d80e4;
  border-radius: 8px;
}

.doc__icon { width: 24px; height: 32px; }
.doc__text { display: flex; flex-direction: column; }
.doc__title { font-weight: 600; line-height: 22px; }
.doc__meta { font-size: 12px; line-height: 18px; font-weight: 300; opacity: .9; }

.nav {
  display: flex;
  justify-content: space-between;
  border-top: 1px solid #2e6be2;
  border-bottom: 1px solid #2e6be2;
  font-weight: 600;
}

.nav a { padding: 16px 0 17px; }

.nav__active { position: relative; }

.nav__active::after {
  content: "";
  position: absolute;
  inset: auto 0 -2px;
  height: 3px;
  background: #fff;
}

.headline {
  display: flex;
  justify-content: space-between;
  align-items: baseline;
  padding-top: 71px;
}

h1 {
  font-size: 54px;
  line-height: 60px;
}

.headline__org {
  font-size: 38px;
  line-height: 48px;
  font-weight: 300;
}

.crumbs {
  display: flex;
  align-items: center;
  gap: 16px;
  padding: 22px 0 0 2px;
  font-size: 13px;
  line-height: 16px;
}

.crumbs__arrow { width: 10px; height: 8px; }
.crumbs__here { color: #d9dbe3; font-weight: 300; }

.contact {
  display: flex;
  justify-content: space-between;
  padding-top: 70px;
}

.contact__info { padding: 0 0 63px 2px; }

.contact dt {
  color: #b3b3b3;
  font-size: 20px;
  line-height: 24px;
  font-weight: 500;
}

.contact dd {
  padding-top: 4px;
  font-size: 31px;
  line-height: 40px;
}

.contact dd + dt { margin-top: 42px; }

/* map hangs over the white section below */
.map {
  position: relative;
  z-index: 1;
  width: 640px;
  height: 1040px;
  margin: 17px 0 -656px;
}

.map__case { stroke: #c9cacd; stroke-width: 14px; stroke-linecap: round; stroke-linejoin: round; }
.map__core { stroke: #fff; stroke-width: 10px; stroke-linecap: round; stroke-linejoin: round; }

.map text {
  font-family: "Open Sans", "Noto Sans", sans-serif;
  paint-order: stroke;
  stroke: #fff;
  stroke-width: 2px;
  stroke-linejoin: round;
}

.map__street { font-size: 17px; fill: #555; }
.map .map__lane { font-size: 12px; fill: #555; }
.map__num { font-size: 12px; fill: #909090; text-anchor: middle; }
.map__num text { stroke: none; }
.map__poi { font-size: 12px; font-weight: 600; text-anchor: middle; }
.map__poi--blue circle { fill: #5aa6ef; }
.map__poi--blue text { fill: #4c9bea; }
.map__poi--violet > circle { fill: #9a86f5; }
.map__poi--violet text { fill: #8f7cf0; }
.map__poi--orange circle { fill: #fb9f5f; }
.map__poi--orange text { fill: #dc7f38; }
.map__poi--pink circle { fill: #cf8fe4; }
.map__poi--pink text { fill: #c07bd8; }
.map__poi--grey circle { fill: #a3a7ab; }
.map__poi--grey text { fill: #84888d; }
.map .map__office { font-family: "Noto Sans", sans-serif; font-size: 15px; fill: #111; stroke: none; }

/* message form */
.write { padding: 57px 0 75px; }
.write h2 { color: var(--blue); }
.form { width: 526px; margin-left: -1px; }

.form__fields {
  display: flex;
  flex-direction: column;
  gap: 21px;
  padding-top: 55px;
}

.field {
  display: flex;
  align-items: center;
  gap: 15px;
  padding: 13px 15px;
  border: 1px solid #f0f0f0;
  border-radius: 10px;
}

.field--filled { border-color: #b5b5b5; }
.field--focus { border-color: #5c5c5c; }
.field--area { padding: 14px 15px 12px; }

.field__icon {
  flex: none;
  width: 24px;
  height: 24px;
  color: var(--navy);
  fill: currentColor;
}

.field__body {
  flex: 1;
  display: flex;
  flex-direction: column;
  gap: 4px;
}

.field label {
  color: #808080;
  font-size: 13px;
  line-height: 16px;
}

.field input,
.field textarea {
  width: 100%;
  height: 24px;
  padding: 0;
  border: 0;
  outline: 0;
  background: none;
  color: #333;
  font-size: 20px;
  line-height: 24px;
}

.field textarea { height: 83px; resize: none; }
.field ::placeholder { color: #808080; opacity: 1; }

.form__foot {
  display: flex;
  align-items: center;
  gap: 45px;
  padding-top: 32px;
}

.btn--send {
  width: 162px;
  height: 64px;
  font-size: 20px;
}

.form__note {
  font-size: 13px;
  line-height: 20px;
  font-weight: 500;
}

.form__note a { color: #e73338; }

/* newsletter */
.news {
  padding: 94px 0 92px;
  background: #f3f4f6;
}

.news h2 { color: var(--navy); }

.news__row {
  display: flex;
  justify-content: space-between;
  align-items: flex-start;
}

.news__lead {
  padding-top: 18px;
  color: #b3b3b3;
}

.subscribe {
  width: 480px;
  margin: 5px -3px 0 0;
}

.subscribe__row { display: flex; }

.subscribe__row input {
  flex: 1;
  min-width: 0;
  height: 64px;
  padding: 0 19px;
  border: 1px solid #d4d7df;
  border-right: 0;
  border-radius: 0;
  background: none;
  font-weight: 500;
}

.subscribe__row ::placeholder { color: #757575; opacity: 1; }
.subscribe__row .btn { width: 161px; }

.consent {
  display: flex;
  align-items: flex-start;
  gap: 16px;
  padding: 33px 0 0 1px;
  color: #6b6b6b;
  font-size: 13px;
  line-height: 18px;
}

.consent input {
  appearance: none;
  flex: none;
  width: 16px;
  height: 16px;
  margin: 0;
  border: 1px solid var(--navy);
  border-radius: 4px;
}

.consent a { color: var(--blue); }

/* footer */
.footer {
  padding: 71px 0 49px;
  background: #000014;
  color: #fff;
}

.footer__main {
  display: grid;
  grid-template-columns: 336px 1fr auto;
}

.footer__brand {
  display: flex;
  flex-direction: column;
  align-items: center;
  justify-self: start;
  padding-top: 2px;
}

.footer__mark { width: 80px; height: 90px; }

.footer__name {
  padding-top: 10px;
  font-size: 22px;
  line-height: 24px;
}

.footer__sub {
  font-size: 9px;
  line-height: 12px;
  letter-spacing: 1px;
}

.footer__nav {
  display: flex;
  flex-direction: column;
  align-items: flex-start;
  gap: 28px;
  font-weight: 600;
}

.footer__contact {
  display: flex;
  flex-direction: column;
  align-items: flex-end;
  padding-top: 2px;
  text-align: right;
}

.btn--small { width: 161px; height: 48px; }

.footer address {
  padding-top: 55px;
  font-style: normal;
}

.footer__contact p { padding-top: 67px; }

.footer__contact a {
  border-bottom: 1px solid #777783;
  font-weight: 300;
}

.footer__legal {
  display: flex;
  justify-content: space-between;
  padding: 112px 0 0 2px;
  color: #73737f;
  font-size: 13px;
  line-height: 16px;
}
```
